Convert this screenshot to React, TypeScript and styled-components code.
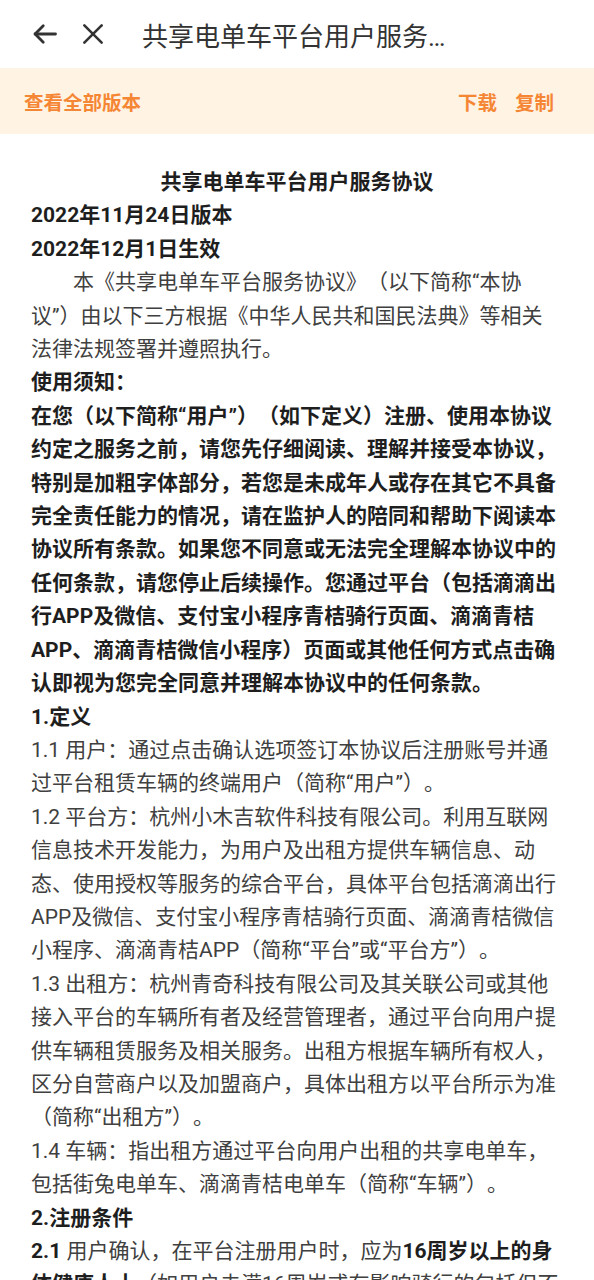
import styled, { createGlobalStyle } from 'styled-components';

const GlobalStyle = createGlobalStyle`
  html, body {
    margin: 0;
    padding: 0;
    background: #ffffff;
  }
  body {
    font-family: Roboto, "Noto Sans CJK SC", "Noto Sans", sans-serif;
    -webkit-font-smoothing: antialiased;
    text-spacing-trim: space-all;
  }
`;

const Page = styled.div`
  width: 100%;
  min-height: 100vh;
  background: #ffffff;
`;

const NavBar = styled.header`
  display: flex;
  align-items: center;
  height: 68px;
  padding: 0 0 0 31px;
  box-sizing: border-box;
  background: #ffffff;
`;

const IconButton = styled.button`
  display: flex;
  align-items: center;
  justify-content: center;
  width: 28px;
  height: 28px;
  padding: 0;
  margin-right: 20px;
  border: none;
  background: transparent;
  color: #333333;
`;

const NavTitle = styled.h1`
  margin: 0 0 0 15px;
  max-width: 314px;
  font-size: 26px;
  font-weight: 400;
  color: #333333;
  white-space: nowrap;
  overflow: hidden;
  text-overflow: ellipsis;
`;

const VersionBar = styled.div`
  display: flex;
  align-items: center;
  justify-content: space-between;
  height: 66px;
  padding: 0 40px 0 24px;
  background: #fff3e4;
`;

const BarLinks = styled.div`
  display: flex;
  gap: 18px;
`;

const BarLink = styled.span`
  font-size: 19.5px;
  font-weight: 700;
  color: #f58634;
`;

const Article = styled.article`
  padding: 32px 31px 40px;
  font-size: 21px;
  line-height: 33.4px;
  color: #444444;
  text-spacing-trim: space-all;
`;

const DocTitle = styled.h2`
  margin: 0;
  font-size: 21px;
  line-height: 33.4px;
  font-weight: 700;
  color: #1e1e1e;
  text-align: center;
`;

const Para = styled.p<{ $bold?: boolean; $indent?: boolean }>`
  margin: 0;
  font-weight: ${(p) => (p.$bold ? 700 : 400)};
  color: ${(p) => (p.$bold ? '#1e1e1e' : '#404040')};
  text-indent: ${(p) => (p.$indent ? '2em' : '0')};
`;

const Strong = styled.strong`
  font-weight: 700;
  color: #1e1e1e;
`;

const BackIcon = () => (
  <svg width="28" height="28" viewBox="0 0 24 24" fill="none" stroke="currentColor" strokeWidth="2.4" strokeLinecap="round" strokeLinejoin="round">
    <line x1="21" y1="12" x2="3.5" y2="12" />
    <polyline points="10.5 5 3.5 12 10.5 19" />
  </svg>
);

const CloseIcon = () => (
  <svg width="26" height="26" viewBox="0 0 24 24" fill="none" stroke="currentColor" strokeWidth="2.4" strokeLinecap="round">
    <line x1="4" y1="4" x2="20" y2="20" />
    <line x1="20" y1="4" x2="4" y2="20" />
  </svg>
);

export default function App() {
  return (
    <Page>
      <GlobalStyle />
      <NavBar>
        <IconButton aria-label="返回">
          <BackIcon />
        </IconButton>
        <IconButton aria-label="关闭">
          <CloseIcon />
        </IconButton>
        <NavTitle>共享电单车平台用户服务协议</NavTitle>
      </NavBar>
      <VersionBar>
        <BarLink>查看全部版本</BarLink>
        <BarLinks>
          <BarLink>下载</BarLink>
          <BarLink>复制</BarLink>
        </BarLinks>
      </VersionBar>
      <Article>
        <DocTitle>共享电单车平台用户服务协议</DocTitle>
        <Para $bold>2022年11月24日版本</Para>
        <Para $bold>2022年12月1日生效</Para>
        <Para $indent>
          本《共享电单车平台服务协议》（以下简称“本协议”）由以下三方根据《中华人民共和国民法典》等相关法律法规签署并遵照执行。
        </Para>
        <Para $bold>使用须知：</Para>
        <Para $bold>
          在您（以下简称“用户”）（如下定义）注册、使用本协议约定之服务之前，请您先仔细阅读、理解并接受本协议，特别是加粗字体部分，若您是未成年人或存在其它不具备完全责任能力的情况，请在监护人的陪同和帮助下阅读本协议所有条款。如果您不同意或无法完全理解本协议中的任何条款，请您停止后续操作。您通过平台（包括滴滴出行APP及微信、支付宝小程序青桔骑行页面、滴滴青桔APP、滴滴青桔微信小程序）页面或其他任何方式点击确认即视为您完全同意并理解本协议中的任何条款。
        </Para>
        <Para $bold>1.定义</Para>
        <Para>1.1 用户：通过点击确认选项签订本协议后注册账号并通过平台租赁车辆的终端用户（简称“用户”）。</Para>
        <Para>
          1.2 平台方：杭州小木吉软件科技有限公司。利用互联网信息技术开发能力，为用户及出租方提供车辆信息、动态、使用授权等服务的综合平台，具体平台包括滴滴出行APP及微信、支付宝小程序青桔骑行页面、滴滴青桔微信小程序、滴滴青桔APP（简称“平台”或“平台方”）。
        </Para>
        <Para>
          1.3 出租方：杭州青奇科技有限公司及其关联公司或其他接入平台的车辆所有者及经营管理者，通过平台向用户提供车辆租赁服务及相关服务。出租方根据车辆所有权人，区分自营商户以及加盟商户，具体出租方以平台所示为准（简称“出租方”）。
        </Para>
        <Para>1.4 车辆：指出租方通过平台向用户出租的共享电单车，包括街兔电单车、滴滴青桔电单车（简称“车辆”）。</Para>
        <Para $bold>2.注册条件</Para>
        <Para>
          <Strong>2.1</Strong> 用户确认，在平台注册用户时，应为<Strong>16周岁以上的身体健康人士</Strong>（如用户未满16周岁或有影响骑行的包括但不限于心脏病、高血压等疾病，请勿注册及使用车辆）。
        </Para>
      </Article>
    </Page>
  );
}
